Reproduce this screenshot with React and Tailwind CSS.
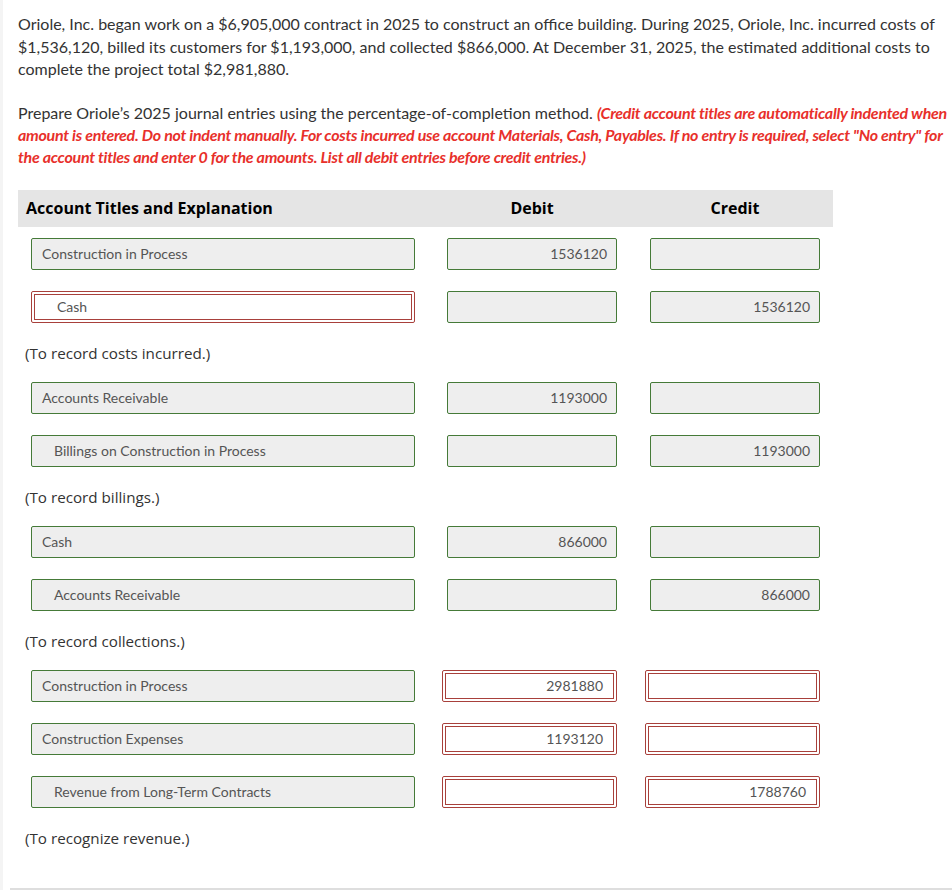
import React from "react";

const entries = [
  {
    rows: [
      { acct: "Construction in Process", debit: "1536120", credit: "" },
      { acct: "Cash", indent: true, acctErr: true, debit: "", credit: "1536120" },
    ],
    note: "(To record costs incurred.)",
  },
  {
    rows: [
      { acct: "Accounts Receivable", debit: "1193000", credit: "" },
      { acct: "Billings on Construction in Process", indent: true, debit: "", credit: "1193000" },
    ],
    note: "(To record billings.)",
  },
  {
    rows: [
      { acct: "Cash", debit: "866000", credit: "" },
      { acct: "Accounts Receivable", indent: true, debit: "", credit: "866000" },
    ],
    note: "(To record collections.)",
  },
  {
    rows: [
      { acct: "Construction in Process", debit: "2981880", credit: "", amtErr: true },
      { acct: "Construction Expenses", debit: "1193120", credit: "", amtErr: true },
      { acct: "Revenue from Long-Term Contracts", indent: true, debit: "", credit: "1788760", amtErr: true },
    ],
    note: "(To recognize revenue.)",
  },
];

// --- campo verde (resposta correta) ---
const GreenField = ({ children, className = "", right }) => (
  <div
    className={`h-8 border border-[#457a38] bg-[#eeeeee] rounded-[2px] flex items-center text-[14px] text-[#555555] ${
      right ? "justify-end pr-[9px]" : ""
    } ${className}`}
  >
    {children}
  </div>
);

// --- campo vermelho com borda dupla ---
const RedField = ({ children, className = "", right }) => (
  <div className={`h-8 border border-[#a8403b] rounded-[2px] p-[2px] bg-white ${className}`}>
    <div
      className={`h-full border border-[#a8403b] flex items-center text-[14px] text-[#555555] ${
        right ? "justify-end pr-[10px]" : ""
      }`}
    >
      {children}
    </div>
  </div>
);

const AccountCell = ({ row }) => {
  const pad = row.indent ? "pl-[22px]" : "pl-[10px]";
  if (row.acctErr) {
    return (
      <RedField className="w-[384px]">
        <span className="pl-[22px]">{row.acct}</span>
      </RedField>
    );
  }
  return (
    <GreenField className={`w-[384px] ${pad}`}>
      <span>{row.acct}</span>
    </GreenField>
  );
};

const AmountCell = ({ value, err }) =>
  err ? (
    <RedField right className="w-[175px] -ml-[5px]">
      {value}
    </RedField>
  ) : (
    <GreenField right className="w-[170px]">
      {value}
    </GreenField>
  );

const EntryRow = ({ row }) => (
  <div className="flex">
    <div className="ml-[13px]">
      <AccountCell row={row} />
    </div>
    <div className="ml-[32px] w-[170px]">
      <AmountCell value={row.debit} err={row.amtErr} />
    </div>
    <div className="ml-[33px] w-[170px]">
      <AmountCell value={row.credit} err={row.amtErr} />
    </div>
  </div>
);

export default function App() {
  return (
    <div className="w-[952px] h-[890px] overflow-hidden bg-white border-l-[3px] border-[#f4f4f4] font-['Lato','Liberation_Sans',sans-serif] text-[#333333]">
      <div className="pl-[15px] pt-[13px] w-[952px] text-[16px] leading-[22.5px]">
        <p className="w-[935px]">
          Oriole, Inc. began work on a $6,905,000 contract in 2025 to construct an office building. During 2025, Oriole,
          Inc. incurred costs of $1,536,120, billed its customers for $1,193,000, and collected $866,000. At December 31,
          2025, the estimated additional costs to complete the project total $2,981,880.
        </p>
        <p className="mt-[21px] w-[935px] leading-[22px]">
          Prepare Oriole’s 2025 journal entries using the percentage-of-completion method.{" "}
          <span className="text-[#e8302b] font-bold italic tracking-[-0.27px]">
            (Credit account titles are automatically indented when amount is entered. Do not indent manually. For costs
            incurred use account Materials, Cash, Payables. If no entry is required, select "No entry" for the account
            titles and enter 0 for the amounts. List all debit entries before credit entries.)
          </span>
        </p>
      </div>

      <div className="ml-[15px] mt-[22px] w-[815px]">
        <div className="h-[37px] bg-[#e5e5e5] flex items-center font-['Open_Sans',sans-serif] font-bold text-[16px] text-black">
          <div className="w-[429px] pl-[8px]">Account Titles and Explanation</div>
          <div className="w-[170px] text-center">Debit</div>
          <div className="w-[33px]" />
          <div className="w-[170px] text-center">Credit</div>
        </div>

        <div className="mt-[11px]">
          {entries.map((entry, i) => (
            <div key={i} className="mb-[18px]">
              <div className="flex flex-col gap-[21px]">
                {entry.rows.map((row, j) => (
                  <EntryRow key={j} row={row} />
                ))}
              </div>
              <p className="mt-[19px] pl-[7px] h-[22px] leading-[22px] text-[15.2px] font-['Open_Sans',sans-serif] text-[#333333]">
                {entry.note}
              </p>
            </div>
          ))}
        </div>
      </div>

      <div className="ml-[7px] mt-[39px] h-[2px] bg-[#dedede]" />
    </div>
  );
}
